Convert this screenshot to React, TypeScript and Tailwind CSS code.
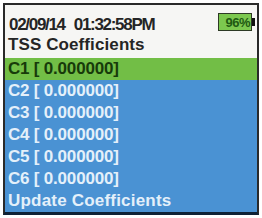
const rows = ["C1 [ 0.000000]", "C2 [ 0.000000]", "C3 [ 0.000000]", "C4 [ 0.000000]", "C5 [ 0.000000]", "C6 [ 0.000000]"]

function Battery({ level }: { level: number }) {
  return (
    <div className="flex items-center">
      <div className="w-[34px] h-[18px] border border-[#2d3a25] bg-[#7cc84f] flex items-center justify-end pr-[1px]">
        <span className="text-[13px] leading-none font-bold text-[#1f5a12] tracking-[-0.5px]">{level}%</span>
      </div>
      <div className="w-[3px] h-[8px] bg-[#111]" />
    </div>
  )
}

export default function App() {
  return (
    <div
      className="w-[262px] h-[218px] bg-white p-[3px]"
      style={{ fontFamily: '"Liberation Sans", Arial, sans-serif' }}
    >
      <div className="h-full border-2 border-[#2a2a2a] border-b-[3px] border-b-[#0f2236] bg-[#4a92d3] flex flex-col">
        {/* Header */}
        <div className="bg-[#f6f6f4] pt-[5px] pb-[2px] text-[#252525] font-bold text-[17px]">
          <div className="h-[24px] flex items-center justify-between pl-[4px] pr-[2px]">
            <div className="flex gap-[9px] mt-[6px] tracking-[-1.3px]">
              <span>02/09/14</span>
              <span>01:32:58PM</span>
            </div>
            <Battery level={96} />
          </div>
          <div className="h-[22px] flex items-center pl-[3px] tracking-[0.1px]">TSS Coefficients</div>
        </div>

        {/* List */}
        <div className="flex flex-col text-[17px] font-bold">
          {rows.map((r, i) => (
            <div
              key={r}
              className={
                i === 0
                  ? "h-[22px] flex items-center pl-[3px] tracking-[-0.2px] bg-[#72be46] text-[#173a0a]"
                  : "h-[22px] flex items-center pl-[3px] tracking-[-0.2px] text-[#e4f0fa]"
              }
            >
              {r}
            </div>
          ))}
          <div className="h-[22px] flex items-center pl-[3px] tracking-[0.2px] text-[#e4f0fa]">Update Coefficients</div>
        </div>
      </div>
    </div>
  )
}
